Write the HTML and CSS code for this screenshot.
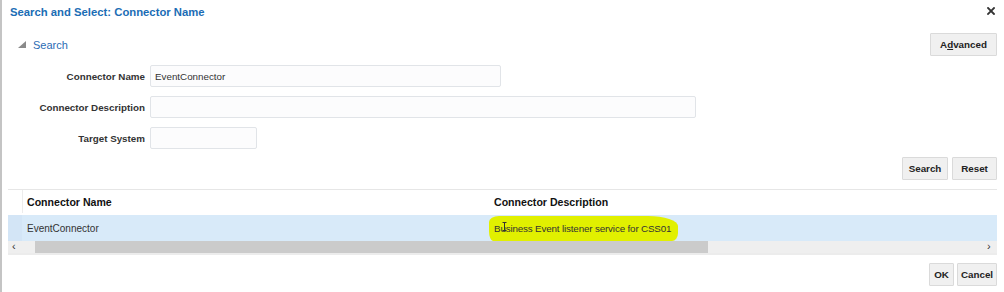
FILE: index.html
```html
<!DOCTYPE html>
<html>
<head>
<meta charset="utf-8">
<link rel="stylesheet" href="styles.css">
</head>
<body>
<div class="dialog">
  <div class="titlebar">
    <div class="title">Search and Select: Connector Name</div>
    <svg class="close" width="8" height="8" viewBox="0 0 8 8"><path d="M1 1L7 7M7 1L1 7" stroke="#333" stroke-width="1.8" stroke-linecap="square"/></svg>
  </div>
  <div class="searchbar">
    <div class="disclose"><span class="tri"></span><span class="link">Search</span></div>
    <button class="btn b-adv">A<u>d</u>vanced</button>
  </div>
  <div class="form">
    <div class="frow"><label class="lbl">Connector Name</label><div class="inp w1">EventConnector</div></div>
    <div class="frow"><label class="lbl">Connector Description</label><div class="inp w2"></div></div>
    <div class="frow"><label class="lbl">Target System</label><div class="inp w3"></div></div>
  </div>
  <div class="actions"><button class="btn b-search">Search</button><button class="btn b-reset">Reset</button></div>
  <div class="table">
    <div class="trow head">
      <div class="rh"></div>
      <div class="c1">Connector Name</div>
      <div class="c2">Connector Description</div>
    </div>
    <div class="trow sel">
      <div class="rh"></div>
      <div class="c1">EventConnector</div>
      <div class="c2"><span class="hl">Business Event listener service for CSS01</span><svg class="ibeam" width="5" height="9" viewBox="0 0 5 9"><path d="M0.5 0.5H4.5M2.5 0.5V8.5M0.5 8.5H4.5" stroke="#333" stroke-width="1" fill="none"/></svg></div>
    </div>
    <div class="scroll">
      <span class="arr">&lsaquo;</span>
      <div class="track"><div class="thumb"></div></div>
      <span class="arr r">&rsaquo;</span>
    </div>
  </div>
  <div class="footer"><button class="btn b-ok">OK</button><button class="btn b-cancel">Cancel</button></div>
</div>
</body>
</html>
```
FILE: styles.css
```css
* { box-sizing: border-box; }
html, body { margin: 0; padding: 0; background: #fff; }
body { font-family: "Liberation Sans", Arial, sans-serif; font-size: 10px; color: #333; }
.dialog {
  width: 1004px; height: 292px;
  border-left: 2px solid #c4c4c4;
  padding: 0 7px 0 8px;
  display: flex; flex-direction: column;
}
.titlebar { height: 24px; display: flex; align-items: center; justify-content: space-between; }
.title { font-size: 11.3px; font-weight: bold; color: #1b6db5; margin-top: -1px; }
.close { margin-right: 2px; margin-top: -2px; }
.searchbar { margin-top: 9px; height: 23px; display: flex; align-items: center; justify-content: space-between; }
.disclose { display: flex; align-items: center; padding-left: 8px; }
.tri { width: 0; height: 0; border-style: solid; border-width: 0 0 7px 8px; border-color: transparent transparent #8a8a8a transparent; margin-right: 7px; }
.link { font-size: 11px; color: #2b6cb4; }
.btn {
  font-family: "Liberation Sans", Arial, sans-serif; font-size: 9.8px; font-weight: bold; color: #222;
  background: #f0f0f0; border: 1px solid #dadada; border-radius: 1px;
  height: 23px; padding: 0; margin: 0; text-align: center;
}
.b-adv { width: 67px; }
.b-search { width: 46px; }
.b-reset { width: 45px; }
.b-ok { width: 25px; }
.b-cancel { width: 40px; }
.btn u { text-decoration: underline; }
.form { margin-top: 9px; display: flex; flex-direction: column; gap: 9px; }
.frow { display: flex; align-items: center; gap: 5px; height: 22px; }
.lbl { width: 135px; text-align: right; font-weight: bold; color: #333; font-size: 9.8px; }
.inp { height: 22px; border: 1px solid #e1e4e8; border-radius: 2px; background: #fcfcfd; padding: 0 4px; display: flex; align-items: center; font-size: 9.8px; color: #333; }
.w1 { width: 351px; }
.w2 { width: 546px; }
.w3 { width: 107px; }
.actions { margin-top: 8px; display: flex; justify-content: flex-end; gap: 4px; }
.table { margin-top: 9px; margin-left: -2px; border-top: 1px solid #e6e6e6; border-bottom: 2px solid #ececec; }
.trow { display: flex; align-items: center; }
.head { height: 25px; font-weight: bold; color: #111; font-size: 10.6px; padding-bottom: 2px; }
.rh { width: 15px; align-self: stretch; border-right: 1px solid #ececec; }
.c1 { width: 467px; padding-left: 4px; }
.c2 { flex: 1; padding-left: 4px; position: relative; }
.sel { height: 26px; background: #d8eaf9; }
.sel .rh { background: #d3e5f6; border-right-color: #d8eaf9; }
.sel .c1 { font-size: 10px; color: #333; }
.hl {
  display: inline-block; font-size: 9.8px; letter-spacing: -0.15px; color: #333;
  background: #e1f000; margin-left: -5px; padding: 7px 7px 7px 5px;
  border-radius: 10px 30px 6px 4px / 6px 10px 8px 10px;
}
.ibeam { position: absolute; left: 12px; top: 6px; }
.scroll { height: 12px; display: flex; align-items: stretch; background: #efefef; }
.arr { width: 15px; font-size: 11px; line-height: 11px; color: #333; padding-left: 4px; }
.arr.r { width: 12px; padding-left: 2px; }
.track { flex: 1; position: relative; }
.thumb { margin-left: 12px; width: 673px; height: 100%; background: #cbcbcb; }
.footer { margin-top: 8px; display: flex; justify-content: flex-end; gap: 3px; }
```
